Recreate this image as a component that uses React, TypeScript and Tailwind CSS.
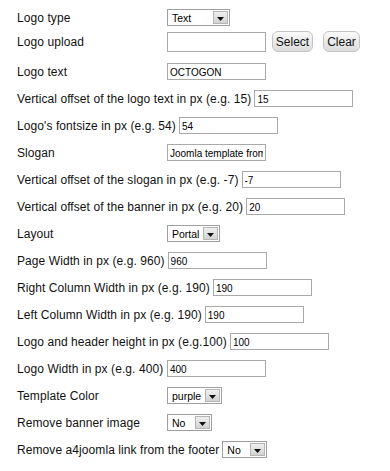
import type { ReactNode } from "react";

function Label({ children }: { children: ReactNode }) {
  return (
    <span className="mr-[3px] inline-block min-w-[147px] shrink-0 whitespace-nowrap text-[12px] tracking-[0.08px] text-[#111]">
      {children}
    </span>
  );
}

function TextBox({ value, tall }: { value?: string; tall?: boolean }) {
  return (
    <input
      readOnly
      defaultValue={value}
      className={`w-[99px] shrink-0 border border-[#a9a9a9] bg-white px-[2px] pt-[1px] font-['Liberation_Sans',Arial,sans-serif] text-[10px] text-black outline-none ${
        tall ? "h-[20px]" : "h-[17px]"
      }`}
    />
  );
}

function Dropdown({ value, width }: { value: string; width: string }) {
  return (
    <div
      className={`flex h-[17px] shrink-0 items-stretch border border-[#9f9f9f] bg-white p-[1px] ${width}`}
    >
      <span className="flex flex-1 items-center pl-[3px] pt-[1px] text-[10.5px] leading-none text-black">
        {value}
      </span>
      <span className="flex w-[15px] items-center justify-center border border-[#b5b5b5] bg-gradient-to-b from-[#f0f0f0] to-[#d2d2d2]">
        <svg width="7" height="4" viewBox="0 0 7 4" className="mt-[2px]">
          <path d="M0 0h7L3.5 4z" fill="#111" />
        </svg>
      </span>
    </div>
  );
}

function Button({ children, width }: { children: ReactNode; width: string }) {
  return (
    <span
      className={`flex h-[21px] shrink-0 items-center justify-center rounded-[6px] border border-[#c4c4c4] bg-gradient-to-b from-[#fafafa] to-[#dcdcdc] text-[12px] text-[#111] ${width}`}
    >
      {children}
    </span>
  );
}

function Row({ label, children }: { label: string; children: ReactNode }) {
  return (
    <div className="flex h-[27px] items-center">
      <Label>{label}</Label>
      {children}
    </div>
  );
}

export default function App() {
  return (
    <div className="h-[471px] w-[390px] overflow-hidden bg-white pl-[17px] pt-[4px] font-['Liberation_Sans',Arial,sans-serif]">
      <Row label="Logo type">
        <Dropdown value="Text" width="w-[63px]" />
      </Row>
      <div className="h-[27px]">
        <div className="flex h-[21px] items-center">
          <Label>Logo upload</Label>
          <TextBox tall />
          <span className="ml-[6px]">
            <Button width="w-[41px]">Select</Button>
          </span>
          <span className="ml-[10px]">
            <Button width="w-[37px]">Clear</Button>
          </span>
        </div>
      </div>
      <Row label="Logo text">
        <TextBox value="OCTOGON" />
      </Row>
      <Row label="Vertical offset of the logo text in px (e.g. 15)">
        <TextBox value="15" />
      </Row>
      <Row label="Logo's fontsize in px (e.g. 54)">
        <TextBox value="54" />
      </Row>
      <Row label="Slogan">
        <TextBox value="Joomla template from a4joomla" />
      </Row>
      <Row label="Vertical offset of the slogan in px (e.g. -7)">
        <TextBox value="-7" />
      </Row>
      <Row label="Vertical offset of the banner in px (e.g. 20)">
        <TextBox value="20" />
      </Row>
      <Row label="Layout">
        <Dropdown value="Portal" width="w-[53px]" />
      </Row>
      <Row label="Page Width in px (e.g. 960)">
        <TextBox value="960" />
      </Row>
      <Row label="Right Column Width in px (e.g. 190)">
        <TextBox value="190" />
      </Row>
      <Row label="Left Column Width in px (e.g. 190)">
        <TextBox value="190" />
      </Row>
      <Row label="Logo and header height in px (e.g.100)">
        <TextBox value="100" />
      </Row>
      <Row label="Logo Width in px (e.g. 400)">
        <TextBox value="400" />
      </Row>
      <Row label="Template Color">
        <Dropdown value="purple" width="w-[55px]" />
      </Row>
      <Row label="Remove banner image">
        <Dropdown value="No" width="w-[45px]" />
      </Row>
      <Row label="Remove a4joomla link from the footer">
        <Dropdown value="No" width="w-[45px]" />
      </Row>
    </div>
  );
}
